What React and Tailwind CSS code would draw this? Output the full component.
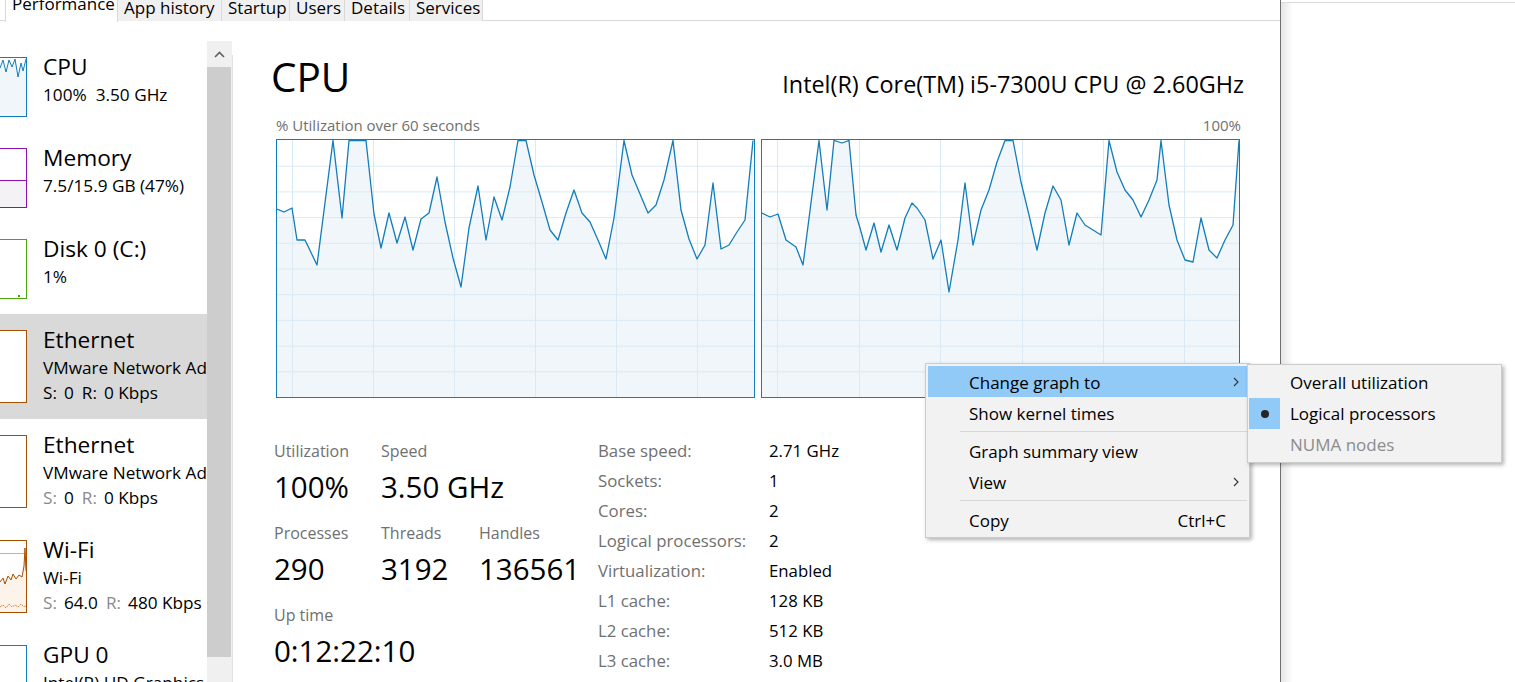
import { useMemo } from 'react';

const LEFT_POINTS = [
  [276, 209], [284, 212], [292, 208], [297, 240], [305, 240], [317, 265], [333, 139], [342, 218],
  [349, 139], [366, 139], [374, 214], [381, 248], [389, 213], [397, 243], [405, 217], [413, 250],
  [421, 219], [429, 213], [437, 177], [445, 222], [453, 258], [461, 287], [469, 228], [478, 186],
  [486, 240], [494, 197], [502, 220], [510, 187], [518, 139], [526, 139], [534, 175], [542, 202],
  [550, 230], [558, 240], [566, 213], [574, 190], [582, 213], [590, 222], [598, 240], [606, 259],
  [614, 218], [624, 139], [632, 175], [640, 194], [648, 213], [656, 205], [664, 180], [673, 139],
  [681, 210], [689, 239], [697, 259], [705, 245], [713, 183], [721, 249], [729, 245], [737, 232],
  [745, 220], [753, 139],
];

const RIGHT_POINTS = [
  [762, 213], [770, 217], [778, 214], [786, 240], [796, 247], [803, 265], [819, 139], [827, 210],
  [834, 139], [842, 143], [849, 139], [856, 215], [860, 228], [866, 250], [874, 223], [881, 252],
  [889, 225], [897, 250], [905, 218], [912, 203], [917, 208], [925, 220], [933, 259], [941, 240],
  [949, 292], [958, 240], [965, 183], [973, 245], [981, 210], [989, 190], [997, 162], [1005, 139],
  [1013, 139], [1021, 182], [1029, 215], [1037, 250], [1045, 213], [1053, 186], [1061, 200],
  [1069, 245], [1077, 213], [1085, 225], [1101, 235], [1109, 139], [1117, 172], [1125, 190],
  [1133, 200], [1141, 217], [1149, 200], [1157, 180], [1161, 139], [1169, 205], [1177, 240],
  [1185, 260], [1193, 262], [1201, 218], [1209, 250], [1217, 258], [1225, 240], [1233, 225],
  [1241, 139],
];

// label + width of each tab in the strip
const TABS = [
  ['Performance', 'w-[113px]'],
  ['App history', 'w-[104px]'],
  ['Startup', 'w-[68px]'],
  ['Users', 'w-[55px]'],
  ['Details', 'w-[65px]'],
  ['Services', 'w-[73px]'],
];

const DETAILS = [
  ['Base speed:', '2.71 GHz'],
  ['Sockets:', '1'],
  ['Cores:', '2'],
  ['Logical processors:', '2'],
  ['Virtualization:', 'Enabled'],
  ['L1 cache:', '128 KB'],
  ['L2 cache:', '512 KB'],
  ['L3 cache:', '3.0 MB'],
];

function CpuGraph({ points, origin, vlines }) {
  const W = 477;
  const H = 257;
  // points come in page coordinates, shift them into the plot box
  const line = useMemo(
    () =>
      points
        .map(([x, y]) => `${Math.min(W, Math.max(0, x - origin))},${Math.max(0.5, y - 140)}`)
        .join(' '),
    [points, origin]
  );

  return (
    <div className="h-[259px] w-[479px] border border-[#117dbb] bg-white">
      <svg width={W} height={H} className="block">
        <polygon points={`0,${H} ${line} ${W},${H}`} fill="#f1f6fa" />
        {[1, 2, 3, 4, 5, 6, 7, 8, 9].map((i) => (
          <line key={`h${i}`} x1="0" x2={W} y1={i * 25.7 + 0.5} y2={i * 25.7 + 0.5} stroke="#d9eaf4" />
        ))}
        {vlines.map((x) => (
          <line key={`v${x}`} x1={x + 0.5} x2={x + 0.5} y1="0" y2={H} stroke="#d9eaf4" />
        ))}
        <polyline points={line} fill="none" stroke="#117dbb" strokeWidth="1.3" strokeLinejoin="round" />
      </svg>
    </div>
  );
}

function Thumb({ color, height, children }) {
  return (
    <div
      className="mt-[16px] w-[27px] shrink-0 overflow-hidden border-y border-r bg-white"
      style={{ borderColor: color, height }}
    >
      {children}
    </div>
  );
}

function NetRate({ s, r, selected }) {
  const label = selected ? 'text-black' : 'text-[#8a8a8a]';
  return (
    <p className="flex">
      <span className={label}>S:</span>
      <span className="ml-[7px]">{s}</span>
      <span className={`ml-[8px] ${label}`}>R:</span>
      <span className="ml-[7px]">{r} Kbps</span>
    </p>
  );
}

function SideItem({ title, lines, thumb, tall, selected }) {
  return (
    <div className={`flex ${tall ? 'h-[105px]' : 'h-[91px]'} ${selected ? 'bg-[#d9d9d9]' : ''}`}>
      {thumb}
      <div className="ml-[16px] mt-[12px] min-w-0 whitespace-nowrap text-black">
        <p className="text-[22.7px] leading-[28px]">{title}</p>
        <div className="mt-[1px] text-[17.2px] leading-[25px]">{lines}</div>
      </div>
    </div>
  );
}

function Sidebar() {
  return (
    <div className="w-[207px] shrink-0 overflow-hidden pt-[20px]">
      <SideItem
        title="CPU"
        lines={
          <p>
            100%<span className="ml-[9px]">3.50 GHz</span>
          </p>
        }
        thumb={
          <Thumb color="#117dbb" height={60}>
            <svg width="27" height="58" className="block">
              <polygon
                points="0,58 0,10 3,2 6,14 9,2 12,9 15,1 18,19 21,5 23,13 26,1 27,1 27,58"
                fill="#f1f6fa"
              />
              <polyline
                points="0,10 3,2 6,14 9,2 12,9 15,1 18,19 21,5 23,13 26,1"
                fill="none"
                stroke="#117dbb"
                strokeWidth="1"
              />
            </svg>
          </Thumb>
        }
      />
      <SideItem
        title="Memory"
        lines={<p>7.5/15.9 GB (47%)</p>}
        thumb={
          <Thumb color="#8b12ae" height={60}>
            <div className="mt-[31px] h-[27px] border-t border-[#8b12ae] bg-[#f4f2f4]" />
          </Thumb>
        }
      />
      <SideItem
        title="Disk 0 (C:)"
        lines={<p>1%</p>}
        thumb={
          <Thumb color="#4da60c" height={60}>
            <div className="ml-[18px] mt-[55px] h-[2px] w-[2px] bg-[#4da60c]" />
          </Thumb>
        }
      />
      <SideItem
        tall
        selected
        title="Ethernet"
        lines={
          <>
            <p>VMware Network Adapter VMnet1</p>
            <NetRate s="0" r="0" selected />
          </>
        }
        thumb={<Thumb color="#a74f01" height={73} />}
      />
      <SideItem
        tall
        title="Ethernet"
        lines={
          <>
            <p>VMware Network Adapter VMnet8</p>
            <NetRate s="0" r="0" />
          </>
        }
        thumb={<Thumb color="#a74f01" height={73} />}
      />
      <SideItem
        tall
        title="Wi-Fi"
        lines={
          <>
            <p>Wi-Fi</p>
            <NetRate s="64.0" r="480" />
          </>
        }
        thumb={
          <Thumb color="#a74f01" height={73}>
            <svg width="27" height="71" className="block">
              <polygon
                points="0,71 0,41 3,37 5,43 8,35 11,39 13,33 16,38 19,34 22,36 24,25 25,7 26,30 27,30 27,71"
                fill="#fcf3eb"
              />
              <line x1="0" x2="27" y1="12.5" y2="12.5" stroke="#e2a97a" />
              <polyline
                points="0,41 3,37 5,43 8,35 11,39 13,33 16,38 19,34 22,36 24,25 25,7 26,30 27,30"
                fill="none"
                stroke="#a74f01"
                strokeWidth="1"
              />
              <polyline
                points="0,66 3,64 6,67 9,63 12,66 15,64 18,66 21,63 24,66 27,64"
                fill="none"
                stroke="#d9864a"
                strokeWidth="1"
                strokeDasharray="2 1"
              />
            </svg>
          </Thumb>
        }
      />
      <SideItem
        tall
        title="GPU 0"
        lines={<p>Intel(R) HD Graphics 620</p>}
        thumb={<Thumb color="#117dbb" height={73} />}
      />
    </div>
  );
}

function Scrollbar() {
  return (
    <div className="flex w-[26px] shrink-0 pt-[20px]">
      <div className="flex w-[25px] flex-col bg-[#f0f0f0]">
        <div className="flex h-[26px] items-center justify-center">
          <svg width="11" height="7" viewBox="0 0 11 7">
            <polyline points="1,6 5.5,1.5 10,6" fill="none" stroke="#606060" strokeWidth="1.6" />
          </svg>
        </div>
        <div className="h-[590px] w-[24px] bg-[#cdcdcd]" />
      </div>
      <div className="mt-[14px] w-[1px] bg-[#e3e3e3]" />
    </div>
  );
}

function Stat({ label, value, className = '' }) {
  return (
    <div className={className}>
      <p className="text-[16px] leading-[20px] text-[#707070]">{label}</p>
      <p className="mt-[8px] text-[29.5px] leading-[36px] text-black">{value}</p>
    </div>
  );
}

function Content() {
  return (
    <div className="min-w-0 flex-1 pl-[38px] pr-[36px] pt-[32px]">
      <div className="flex items-baseline justify-between">
        <h1 className="text-[40.5px] leading-[48px] text-black">CPU</h1>
        <p className="translate-y-[1px] text-[23.4px] text-black">Intel(R) Core(TM) i5-7300U CPU @ 2.60GHz</p>
      </div>

      <div className="ml-[5px] mr-[3px] mt-[14px] flex justify-between text-[15px] leading-[20px] text-[#707070]">
        <span>% Utilization over 60 seconds</span>
        <span>100%</span>
      </div>

      <div className="ml-[5px] mt-[4px] flex gap-[6px]">
        <CpuGraph points={LEFT_POINTS} origin={277} vlines={[15, 96, 177, 258, 339, 420]} />
        <CpuGraph points={RIGHT_POINTS} origin={762} vlines={[15, 97, 178, 260, 341, 422]} />
      </div>

      <div className="mt-[38px] flex">
        <div className="ml-[3px] w-[324px] pt-[5px]">
          <div className="flex">
            <Stat label="Utilization" value="100%" className="w-[107px]" />
            <Stat label="Speed" value="3.50 GHz" />
          </div>
          <div className="mt-[18px] flex">
            <Stat label="Processes" value="290" className="w-[107px]" />
            <Stat label="Threads" value="3192" className="w-[98px]" />
            <Stat label="Handles" value="136561" />
          </div>
          <Stat label="Up time" value="0:12:22:10" className="mt-[18px]" />
        </div>

        <div className="grid grid-cols-[171px_auto] text-[16.8px] leading-[30px]">
          {DETAILS.map(([k, v]) => (
            <div key={k} className="contents">
              <span className="text-[#707070]">{k}</span>
              <span className="text-black">{v}</span>
            </div>
          ))}
        </div>
      </div>
    </div>
  );
}

function Chevron() {
  return (
    <svg width="6" height="10" viewBox="0 0 6 10" className="mr-[8px]">
      <polyline points="1,1 5,5 1,9" fill="none" stroke="#333" strokeWidth="1.1" />
    </svg>
  );
}

function MenuItem({ children, active, right }) {
  return (
    <div
      className={`flex h-[31px] items-center justify-between pl-[41px] ${active ? 'bg-[#91c9f7]' : ''}`}
    >
      <span className="translate-y-[1px]">{children}</span>
      {right}
    </div>
  );
}

function Separator() {
  return (
    <div className="flex h-[7px] items-center pl-[32px]">
      <div className="h-[1px] w-full bg-[#d7d7d7]" />
    </div>
  );
}

function ContextMenu() {
  return (
    <>
      <div className="absolute left-[925px] top-[363px] w-[325px] border border-[#cccccc] bg-[#f2f2f2] p-[2px] text-[17px] text-black shadow-[2px_2px_4px_rgba(0,0,0,0.3)]">
        <MenuItem active right={<Chevron />}>
          Change graph to
        </MenuItem>
        <MenuItem>Show kernel times</MenuItem>
        <Separator />
        <MenuItem>Graph summary view</MenuItem>
        <MenuItem right={<Chevron />}>View</MenuItem>
        <Separator />
        <MenuItem right={<span className="mr-[21px] translate-y-[1px]">Ctrl+C</span>}>Copy</MenuItem>
      </div>

      <div className="absolute left-[1247px] top-[364px] w-[255px] border border-[#cccccc] bg-[#f2f2f2] px-[1px] py-[2px] text-[17px] text-black shadow-[2px_2px_4px_rgba(0,0,0,0.3)]">
        <div className="flex h-[31px] items-center">
          <span className="w-[31px]" />
          <span className="ml-[10px]">Overall utilization</span>
        </div>
        <div className="flex h-[31px] items-center">
          <span className="flex h-[31px] w-[31px] items-center justify-center bg-[#91c9f7]">
            <span className="h-[8px] w-[8px] rounded-full bg-[#262626]" />
          </span>
          <span className="ml-[10px]">Logical processors</span>
        </div>
        <div className="flex h-[31px] items-center text-[#8c8c8c]">
          <span className="w-[31px]" />
          <span className="ml-[10px]">NUMA nodes</span>
        </div>
      </div>
    </>
  );
}

export default function App() {
  return (
    <div className="relative flex h-[682px] w-[1515px] overflow-hidden bg-white font-['Open_Sans',sans-serif]">
      <div className="flex w-[1281px] shrink-0 flex-col border-r border-[#707070]">
        <div className="flex h-[21px] shrink-0 border-b border-[#d9d9d9] pl-[5px] text-[17px] leading-[15px] text-black">
          {TABS.map(([tab, width], i) => (
            <div
              key={tab}
              className={`h-[21px] shrink-0 whitespace-nowrap border-r border-[#d9d9d9] pl-[6px] ${width} ${
                i === 0 ? 'relative z-10 -mb-[1px] h-[22px] border-l bg-white' : 'bg-[#f0f0f0]'
              }`}
            >
              <span className={i === 0 ? 'relative -top-[4px]' : ''}>{tab}</span>
            </div>
          ))}
        </div>

        <div className="flex min-h-0 flex-1">
          <Sidebar />
          <Scrollbar />
          <Content />
        </div>
      </div>

      <div className="mt-[2px] flex-1 border-t border-[#dadada] bg-gradient-to-r from-[#e6e6e6] via-white to-white bg-no-repeat [background-size:24px_100%]" />

      <ContextMenu />
    </div>
  );
}
